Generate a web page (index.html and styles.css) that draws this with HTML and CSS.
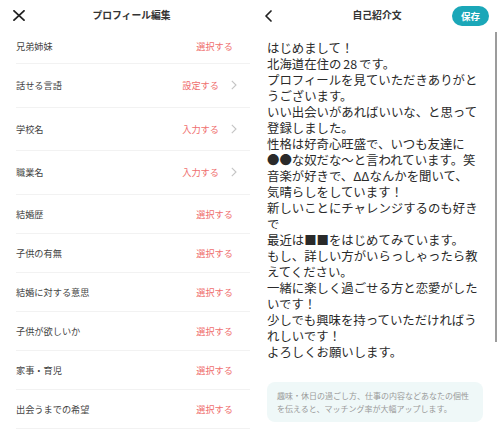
FILE: index.html
```html
<!DOCTYPE html>
<html lang="ja">
<head>
    <meta charset="UTF-8">
    <meta name="viewport" content="width=device-width, initial-scale=1.0">
    <title>プロフィール編集</title>
    <link rel="stylesheet" href="styles.css">
</head>
<body>
    <div class="screens">
        <!-- left: profile edit list -->
        <div class="pane">
            <div class="bar">
                <svg class="close" width="12" height="11" viewBox="0 0 12 11">
                    <path d="M1 0.8 L11 10.2 M11 0.8 L1 10.2" stroke="#222" stroke-width="1.8" fill="none" stroke-linecap="round"/>
                </svg>
                <div class="bar-title">プロフィール編集</div>
                <div></div>
            </div>
            <ul class="rows">
                <li class="row first"><span class="label">兄弟姉妹</span><span class="action">選択する</span></li>
                <li class="row tall more"><span class="label">話せる言語</span><span class="action">設定する<svg class="chev" width="6" height="10" viewBox="0 0 6 10"><path d="M0.8 0.8 L5 5 L0.8 9.2" stroke="#c4c4c4" stroke-width="1.1" fill="none"/></svg></span></li>
                <li class="row tall more"><span class="label">学校名</span><span class="action">入力する<svg class="chev" width="6" height="10" viewBox="0 0 6 10"><path d="M0.8 0.8 L5 5 L0.8 9.2" stroke="#c4c4c4" stroke-width="1.1" fill="none"/></svg></span></li>
                <li class="row tall more"><span class="label">職業名</span><span class="action">入力する<svg class="chev" width="6" height="10" viewBox="0 0 6 10"><path d="M0.8 0.8 L5 5 L0.8 9.2" stroke="#c4c4c4" stroke-width="1.1" fill="none"/></svg></span></li>
                <li class="row"><span class="label">結婚歴</span><span class="action">選択する</span></li>
                <li class="row"><span class="label">子供の有無</span><span class="action">選択する</span></li>
                <li class="row"><span class="label">結婚に対する意思</span><span class="action">選択する</span></li>
                <li class="row"><span class="label">子供が欲しいか</span><span class="action">選択する</span></li>
                <li class="row"><span class="label">家事・育児</span><span class="action">選択する</span></li>
                <li class="row"><span class="label">出会うまでの希望</span><span class="action">選択する</span></li>
            </ul>
        </div>

        <!-- right: self introduction -->
        <div class="pane intro">
            <div class="bar bar-right">
                <svg class="back" width="7" height="12" viewBox="0 0 7 12">
                    <path d="M6 1 L1 6 L6 11" stroke="#222" stroke-width="1.7" fill="none" stroke-linecap="round" stroke-linejoin="round"/>
                </svg>
                <div class="bar-title">自己紹介文</div>
                <button class="save">保存</button>
            </div>
            <div class="intro-text">
                はじめまして！<br>
                北海道在住の<span class="num">28</span>です。<br>
                プロフィールを見ていただきありがと<br>
                うございます。<br>
                いい出会いがあればいいな、と思って<br>
                登録しました。<br>
                性格は好奇心旺盛で、いつも友達に<br>
                ●●な奴だな〜と言われています。笑<br>
                音楽が好きで、ΔΔなんかを聞いて、<br>
                気晴らしをしています！<br>
                新しいことにチャレンジするのも好き<br>
                で<br>
                最近は■■をはじめてみています。<br>
                もし、詳しい方がいらっしゃったら教<br>
                えてください。<br>
                一緒に楽しく過ごせる方と恋愛がした<br>
                いです！<br>
                少しでも興味を持っていただければう<br>
                れしいです！<br>
                よろしくお願いします。
            </div>
            <div class="hint">
                趣味・休日の過ごし方、仕事の内容などあなたの個性<br>
                を伝えると、マッチング率が大幅アップします。
            </div>
            <div class="scroll"></div>
        </div>
    </div>
</body>
</html>
```

FILE: styles.css
```css
body {
    margin: 0;
    padding: 0;
    background: #fff;
    font-family: "Noto Sans CJK JP", "Noto Sans", sans-serif;
    color: #333;
}
.screens {
    display: flex;
    width: 500px;
    height: 432px;
    overflow: hidden;
}
.pane {
    width: 250px;
    position: relative;
}

/* top bars */
.bar {
    box-sizing: border-box;
    height: 26px;
    padding: 5px 0 0 13px;
    display: grid;
    grid-template-columns: 1fr auto 1fr;
    align-items: center;
}
.bar-title {
    font-size: 9.8px;
    font-weight: bold;
    color: #333;
    line-height: 1;
}
.bar-right {
    height: 32px;
    padding: 0 11px 0 15px;
}
.back {
    display: block;
}
.save {
    justify-self: end;
    width: 37px;
    height: 20px;
    border: none;
    border-radius: 10px;
    background: #1ba7b8;
    color: #fff;
    font-family: inherit;
    font-size: 9.5px;
    font-weight: bold;
    padding: 0;
}

/* list rows */
.rows {
    list-style-type: none;
    margin: 0;
    padding: 0;
}
.row {
    box-sizing: border-box;
    height: 39px;
    margin-left: 16px;
    padding-right: 17px;
    border-bottom: 1px solid #f2f2f2;
    display: flex;
    justify-content: space-between;
    align-items: center;
    font-size: 9.2px;
}
.row.first {
    height: 38px;
    padding-top: 2px;
}
.row.tall {
    height: 43.6px;
}
.row.more {
    padding-right: 13px;
}
.label {
    color: #444;
}
.action {
    color: #ef6e6e;
    display: flex;
    align-items: center;
}
.chev {
    margin-left: 12px;
}

/* intro */
.intro-text {
    padding: 8px 0 0 17px;
    font-size: 12.4px;
    line-height: 16px;
    color: #2a2a2a;
    white-space: nowrap;
}
.num {
    padding: 0 2px;
}
.hint {
    margin: 22px 0 0 17px;
    width: 216px;
    box-sizing: border-box;
    padding: 8px 0 7px 10px;
    background: #eff8f8;
    border-radius: 8px;
    font-size: 8px;
    line-height: 12.5px;
    color: #9a9a9a;
    white-space: nowrap;
}
.scroll {
    position: absolute;
    top: 32px;
    left: 245px;
    width: 1.5px;
    height: 310px;
    background: #9c9c9c;
}
```
